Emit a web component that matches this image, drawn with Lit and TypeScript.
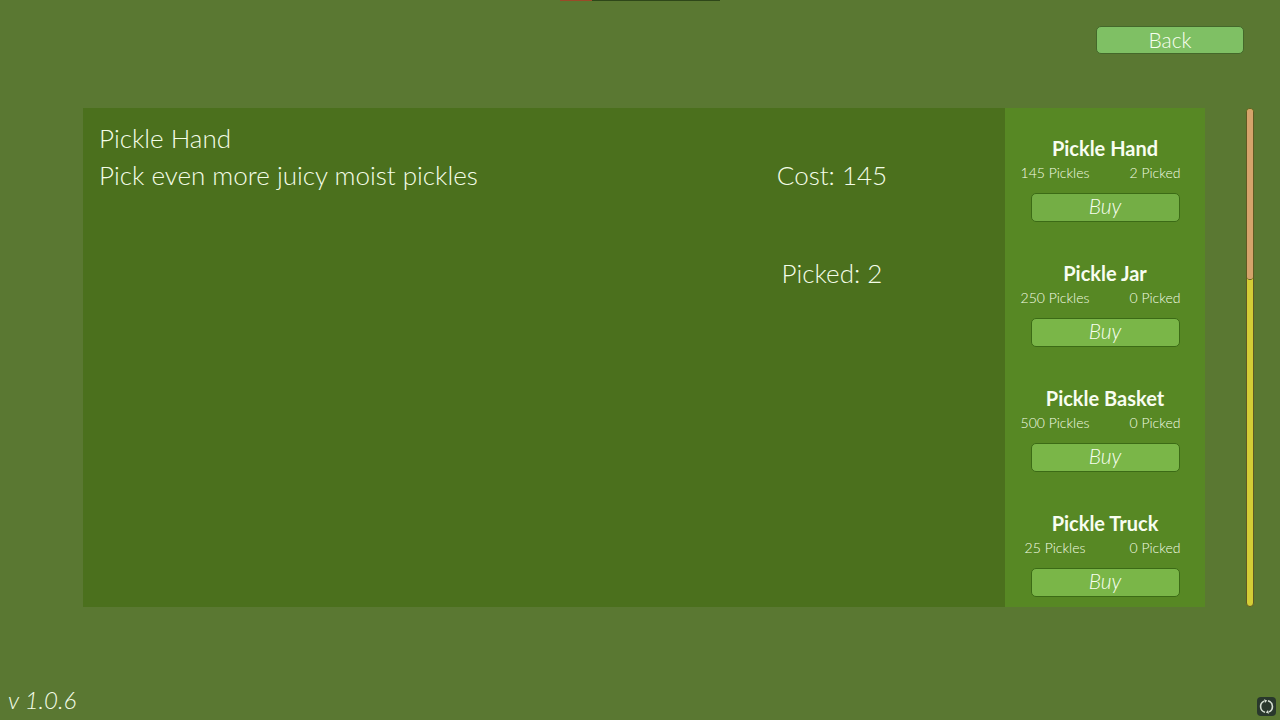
import { LitElement, html, css } from "lit";
import { customElement, property, state } from "lit/decorators.js";

interface Upgrade {
  name: string;
  blurb: string;
  cost: number;
  picked: number;
}

const UPGRADES: Upgrade[] = [
  { name: "Pickle Hand", blurb: "Pick even more juicy moist pickles", cost: 145, picked: 2 },
  { name: "Pickle Jar", blurb: "", cost: 250, picked: 0 },
  { name: "Pickle Basket", blurb: "", cost: 500, picked: 0 },
  { name: "Pickle Truck", blurb: "", cost: 25, picked: 0 },
];

@customElement("upgrade-card")
class UpgradeCard extends LitElement {
  @property({ attribute: false }) upgrade!: Upgrade;
  @property({ type: Boolean, reflect: true }) active = false;

  static styles = css`
    :host {
      display: flex;
      flex-direction: column;
      align-items: center;
      box-sizing: border-box;
      height: 125px;
      padding-top: 28px;
      color: #f8fdf0;
    }
    .name {
      margin: 0;
      font-size: 20px;
      line-height: 24px;
      font-weight: 700;
    }
    .stats {
      display: grid;
      grid-template-columns: 1fr 1fr;
      align-self: stretch;
      text-align: center;
      white-space: nowrap;
      font-size: 14px;
      line-height: 26px;
      color: #f4fde4;
    }
    .buy {
      box-sizing: border-box;
      width: 149px;
      height: 29px;
      margin-top: 7px;
      padding: 0 0 4px;
      border: 1px solid #3c6b16;
      border-radius: 5px;
      background: #7ab648;
      color: #f8fff0;
      font: italic 300 21px/22px Lato, sans-serif;
      cursor: pointer;
    }
    :host([active]) .buy {
      background: #74ae45;
    }
  `;

  render() {
    const u = this.upgrade;
    return html`
      <h2 class="name">${u.name}</h2>
      <div class="stats"><span>${u.cost} Pickles</span><span>${u.picked} Picked</span></div>
      <button class="buy">Buy</button>
    `;
  }
}

@customElement("app-root")
class AppRoot extends LitElement {
  @state() private selected = 0;

  static styles = css`
    :host {
      display: flex;
      flex-direction: column;
      position: relative;
      box-sizing: border-box;
      min-height: 100vh;
      background: #5a7832;
      color: #f4fde8;
      font-family: Lato, sans-serif;
      font-weight: 300;
    }
    .progress {
      position: absolute;
      top: 0;
      left: 50%;
      width: 160px;
      height: 1px;
      margin-left: -80px;
      background: #2e4719;
    }
    .progress-fill {
      height: 100%;
      background: #9a4a28;
    }
    .top {
      display: flex;
      justify-content: flex-end;
      box-sizing: border-box;
      height: 108px;
      padding: 26px 36px;
    }
    .back {
      box-sizing: border-box;
      width: 148px;
      height: 28px;
      padding: 0;
      border: 1px solid #44682a;
      border-radius: 5px;
      background: #7fc064;
      color: #f8fff0;
      font: 300 21px/24px Lato, sans-serif;
      cursor: pointer;
    }
    .main {
      display: flex;
      flex: 1;
      padding: 0 26px 0 83px;
    }
    .details {
      display: grid;
      flex: 1;
      grid-template-columns: 1fr 200px;
      align-content: start;
      padding: 12px 73px 0 16px;
      background: #4b701d;
      font-size: 26px;
      line-height: 37px;
    }
    .title {
      grid-column: 1 / -1;
      margin: 0;
      font: inherit;
    }
    .blurb {
      margin: 0;
    }
    .totals {
      display: grid;
      gap: 61px;
      text-align: center;
    }
    .shop {
      width: 200px;
      height: 499px;
      overflow: hidden;
      background: #578824;
    }
    .scroll {
      box-sizing: border-box;
      display: flex;
      flex-direction: column;
      width: 8px;
      margin-left: 41px;
      border-radius: 4px;
      background: #d4cd36;
      border: 1px solid #5f5a22;
    }
    .thumb {
      box-sizing: border-box;
      border-radius: 4px;
      border-bottom: 1px solid #5f5a22;
      background: #d5a36b;
    }
    .bottom {
      display: flex;
      align-items: flex-end;
      justify-content: space-between;
      box-sizing: border-box;
      height: 113px;
      padding: 0 4px 4px 8px;
    }
    .version {
      font-size: 24px;
      line-height: 32px;
      font-style: italic;
    }
    .sync {
      width: 19px;
      height: 19px;
      padding: 0;
      border: 0;
      border-radius: 4px;
      background: #29382c;
    }
    .sync svg {
      display: block;
    }
  `;

  render() {
    const current = UPGRADES[this.selected];
    return html`
      <div class="progress"><div class="progress-fill" style="width:20%"></div></div>
      <header class="top"><button class="back">Back</button></header>
      <main class="main">
        <section class="details">
          <h1 class="title">${current.name}</h1>
          <p class="blurb">${current.blurb}</p>
          <div class="totals">
            <span>Cost: ${current.cost}</span>
            <span>Picked: ${current.picked}</span>
          </div>
        </section>
        <section class="shop" id="shop">
          ${UPGRADES.map(
            (u, i) => html`<upgrade-card
              .upgrade=${u}
              ?active=${i === this.selected}
              @mouseenter=${() => (this.selected = i)}
            ></upgrade-card>`
          )}
        </section>
        <div class="scroll" role="scrollbar" aria-controls="shop" aria-valuenow="0">
          <div class="thumb" style="height:34.5%"></div>
        </div>
      </main>
      <footer class="bottom">
        <span class="version">v 1.0.6</span>
        <button class="sync" aria-label="Rotate">
          <svg width="19" height="19" viewBox="0 0 19 19" fill="none" stroke="#d5dfd2" stroke-width="1.6">
            <path d="M8 15.3A6 6 0 0 1 7 4.1" />
            <path d="M11 3.7A6 6 0 0 1 12 14.9" />
            <path d="M7 2.2l3.2 1.2-2.2 2.5zM12 16.8l-3.2-1.2 2.2-2.5z" fill="#d5dfd2" stroke="none" />
          </svg>
        </button>
      </footer>
    `;
  }
}
